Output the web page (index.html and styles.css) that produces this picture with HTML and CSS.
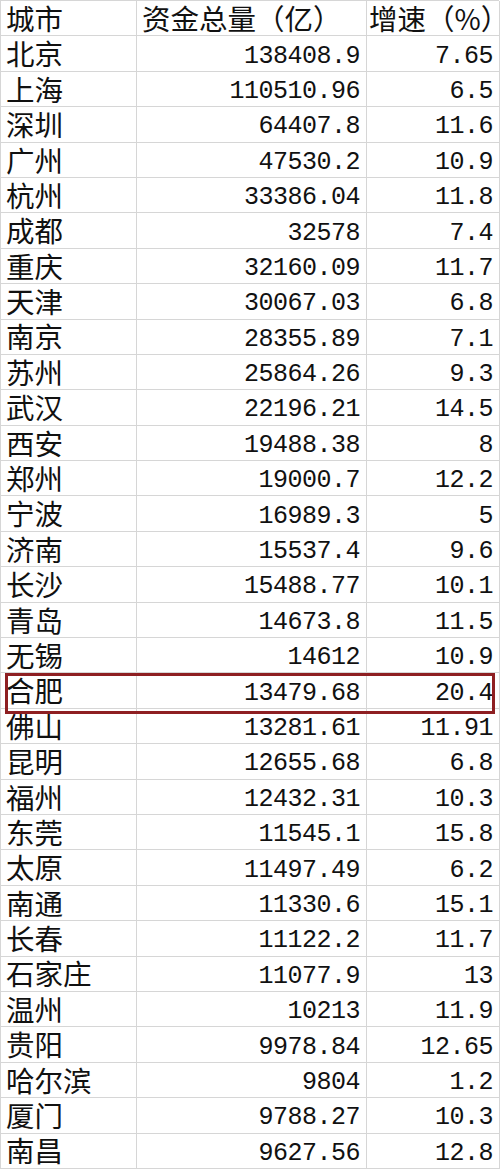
FILE: index.html
```html
<!DOCTYPE html>
<html lang="zh-CN">
<head>
<meta charset="utf-8">
<title>城市资金总量</title>
<link rel="stylesheet" href="styles.css">
</head>
<body>
<div class="sheet">
  <div class="grid">
    <div class="cell name head">城市</div><div class="cell head">资金总量（亿）</div><div class="cell head head-rate">增速（%）</div>
    <div class="cell name">北京</div><div class="cell num">138408.9</div><div class="cell num">7.65</div>
    <div class="cell name">上海</div><div class="cell num">110510.96</div><div class="cell num">6.5</div>
    <div class="cell name">深圳</div><div class="cell num">64407.8</div><div class="cell num">11.6</div>
    <div class="cell name">广州</div><div class="cell num">47530.2</div><div class="cell num">10.9</div>
    <div class="cell name">杭州</div><div class="cell num">33386.04</div><div class="cell num">11.8</div>
    <div class="cell name">成都</div><div class="cell num">32578</div><div class="cell num">7.4</div>
    <div class="cell name">重庆</div><div class="cell num">32160.09</div><div class="cell num">11.7</div>
    <div class="cell name">天津</div><div class="cell num">30067.03</div><div class="cell num">6.8</div>
    <div class="cell name">南京</div><div class="cell num">28355.89</div><div class="cell num">7.1</div>
    <div class="cell name">苏州</div><div class="cell num">25864.26</div><div class="cell num">9.3</div>
    <div class="cell name">武汉</div><div class="cell num">22196.21</div><div class="cell num">14.5</div>
    <div class="cell name">西安</div><div class="cell num">19488.38</div><div class="cell num">8</div>
    <div class="cell name">郑州</div><div class="cell num">19000.7</div><div class="cell num">12.2</div>
    <div class="cell name">宁波</div><div class="cell num">16989.3</div><div class="cell num">5</div>
    <div class="cell name">济南</div><div class="cell num">15537.4</div><div class="cell num">9.6</div>
    <div class="cell name">长沙</div><div class="cell num">15488.77</div><div class="cell num">10.1</div>
    <div class="cell name">青岛</div><div class="cell num">14673.8</div><div class="cell num">11.5</div>
    <div class="cell name">无锡</div><div class="cell num">14612</div><div class="cell num">10.9</div>
    <div class="cell name">合肥</div><div class="cell num">13479.68</div><div class="cell num">20.4</div>
    <div class="cell name">佛山</div><div class="cell num">13281.61</div><div class="cell num">11.91</div>
    <div class="cell name">昆明</div><div class="cell num">12655.68</div><div class="cell num">6.8</div>
    <div class="cell name">福州</div><div class="cell num">12432.31</div><div class="cell num">10.3</div>
    <div class="cell name">东莞</div><div class="cell num">11545.1</div><div class="cell num">15.8</div>
    <div class="cell name">太原</div><div class="cell num">11497.49</div><div class="cell num">6.2</div>
    <div class="cell name">南通</div><div class="cell num">11330.6</div><div class="cell num">15.1</div>
    <div class="cell name">长春</div><div class="cell num">11122.2</div><div class="cell num">11.7</div>
    <div class="cell name">石家庄</div><div class="cell num">11077.9</div><div class="cell num">13</div>
    <div class="cell name">温州</div><div class="cell num">10213</div><div class="cell num">11.9</div>
    <div class="cell name">贵阳</div><div class="cell num">9978.84</div><div class="cell num">12.65</div>
    <div class="cell name">哈尔滨</div><div class="cell num">9804</div><div class="cell num">1.2</div>
    <div class="cell name">厦门</div><div class="cell num">9788.27</div><div class="cell num">10.3</div>
    <div class="cell name">南昌</div><div class="cell num">9627.56</div><div class="cell num">12.8</div>
  </div>
  <div class="highlight"></div>
</div>
</body>
</html>
```
FILE: styles.css
```css
* { box-sizing: border-box; }
html, body {
  margin: 0;
  padding: 0;
  background: #ffffff;
}
.sheet {
  position: relative;
  width: 500px;
  height: 1171px;
  overflow: hidden;
}
.grid {
  display: grid;
  grid-template-columns: 136px 230px 133px;
  grid-auto-rows: 35.4px;
  border-top: 1px solid #d6d6d6;
  border-left: 1px solid #d6d6d6;
  width: 499px;
}
.cell {
  border-right: 1px solid #d6d6d6;
  border-bottom: 1px solid #d6d6d6;
  display: flex;
  align-items: center;
  overflow: visible;
  white-space: nowrap;
  color: #111;
}
.name, .head {
  font-family: "Noto Sans CJK SC", "Liberation Sans", sans-serif;
  font-size: 28.5px;
  line-height: 1;
  padding-left: 5px;
}
.head { padding-left: 5px; }
.head-rate { padding-left: 2px; }
.num {
  justify-content: flex-end;
  font-family: "Liberation Mono", "DejaVu Sans Mono", monospace;
  font-size: 25px;
  letter-spacing: -0.5px;
  padding-right: 6px;
  padding-top: 5px;
  line-height: 1;
}
.highlight {
  position: absolute;
  left: 5px;
  top: 673px;
  width: 490px;
  height: 41px;
  border: 3px solid #8e1f22;
}
```
